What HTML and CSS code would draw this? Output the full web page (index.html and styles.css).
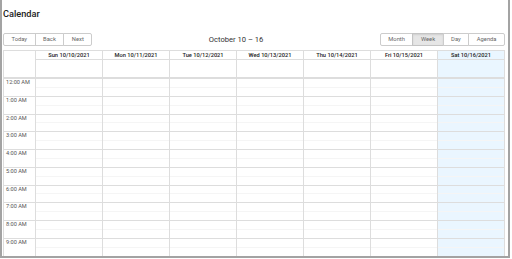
FILE: index.html
```html
<!DOCTYPE html>
<html lang="en">
<head>
    <meta charset="UTF-8">
    <meta name="viewport" content="width=device-width, initial-scale=1.0">
    <title>Calendar</title>
    <link rel="stylesheet" href="styles.css">
</head>
<body>
    <div class="frame">
        <h1 class="page-title">Calendar</h1>

        <div class="calendar">
            <div class="toolbar">
                <span class="btn-group">
                    <button type="button">Today</button>
                    <button type="button">Back</button>
                    <button type="button">Next</button>
                </span>
                <span class="toolbar-label">October 10 – 16</span>
                <span class="btn-group">
                    <button type="button">Month</button>
                    <button type="button" class="active">Week</button>
                    <button type="button">Day</button>
                    <button type="button">Agenda</button>
                </span>
            </div>

            <div class="time-view">
                <div class="time-header">
                    <div class="header-gutter"></div>
                    <div class="day-head"><div class="day-name">Sun 10/10/2021</div><div class="allday"></div></div>
                    <div class="day-head"><div class="day-name">Mon 10/11/2021</div><div class="allday"></div></div>
                    <div class="day-head"><div class="day-name">Tue 10/12/2021</div><div class="allday"></div></div>
                    <div class="day-head"><div class="day-name">Wed 10/13/2021</div><div class="allday"></div></div>
                    <div class="day-head"><div class="day-name">Thu 10/14/2021</div><div class="allday"></div></div>
                    <div class="day-head"><div class="day-name">Fri 10/15/2021</div><div class="allday"></div></div>
                    <div class="day-head today"><div class="day-name">Sat 10/16/2021</div><div class="allday"></div></div>
                </div>

                <div class="time-content">
                    <div class="hour-row"><div class="label">12:00 AM</div><div class="slot"></div><div class="slot"></div><div class="slot"></div><div class="slot"></div><div class="slot"></div><div class="slot"></div><div class="slot today"></div></div>
                    <div class="hour-row"><div class="label">1:00 AM</div><div class="slot"></div><div class="slot"></div><div class="slot"></div><div class="slot"></div><div class="slot"></div><div class="slot"></div><div class="slot today"></div></div>
                    <div class="hour-row"><div class="label">2:00 AM</div><div class="slot"></div><div class="slot"></div><div class="slot"></div><div class="slot"></div><div class="slot"></div><div class="slot"></div><div class="slot today"></div></div>
                    <div class="hour-row"><div class="label">3:00 AM</div><div class="slot"></div><div class="slot"></div><div class="slot"></div><div class="slot"></div><div class="slot"></div><div class="slot"></div><div class="slot today"></div></div>
                    <div class="hour-row"><div class="label">4:00 AM</div><div class="slot"></div><div class="slot"></div><div class="slot"></div><div class="slot"></div><div class="slot"></div><div class="slot"></div><div class="slot today"></div></div>
                    <div class="hour-row"><div class="label">5:00 AM</div><div class="slot"></div><div class="slot"></div><div class="slot"></div><div class="slot"></div><div class="slot"></div><div class="slot"></div><div class="slot today"></div></div>
                    <div class="hour-row"><div class="label">6:00 AM</div><div class="slot"></div><div class="slot"></div><div class="slot"></div><div class="slot"></div><div class="slot"></div><div class="slot"></div><div class="slot today"></div></div>
                    <div class="hour-row"><div class="label">7:00 AM</div><div class="slot"></div><div class="slot"></div><div class="slot"></div><div class="slot"></div><div class="slot"></div><div class="slot"></div><div class="slot today"></div></div>
                    <div class="hour-row"><div class="label">8:00 AM</div><div class="slot"></div><div class="slot"></div><div class="slot"></div><div class="slot"></div><div class="slot"></div><div class="slot"></div><div class="slot today"></div></div>
                    <div class="hour-row"><div class="label">9:00 AM</div><div class="slot"></div><div class="slot"></div><div class="slot"></div><div class="slot"></div><div class="slot"></div><div class="slot"></div><div class="slot today"></div></div>
                </div>
            </div>
        </div>
    </div>
</body>
</html>
```

FILE: styles.css
```css
* {
    margin: 0;
    padding: 0;
    box-sizing: border-box;
}

body {
    font-family: Roboto, 'Liberation Sans', sans-serif;
    background: #ffffff;
    color: #373a3c;
}

.frame {
    width: 510px;
    height: 258px;
    border: 2px solid #a3a3a3;
    border-top: 0;
    padding: 0 3px 0 1px;
    overflow: hidden;
}

.page-title {
    font-size: 9.2px;
    font-weight: 500;
    line-height: 12px;
    color: #222;
    margin: 8px 0 13px 0;
}

.toolbar {
    display: flex;
    align-items: center;
    height: 13px;
    margin-bottom: 4px;
}

.btn-group {
    display: flex;
}

.btn-group button {
    font-family: inherit;
    font-size: 5.8px;
    line-height: 11px;
    height: 13px;
    padding: 0 7.5px;
    color: #666;
    background: #fff;
    border: 1px solid #ccc;
}

.btn-group button + button {
    margin-left: -1px;
}

.btn-group button:first-child {
    border-radius: 2px 0 0 2px;
}

.btn-group button:last-child {
    border-radius: 0 2px 2px 0;
}

.btn-group button.active {
    background: #e6e6e6;
    border-color: #c4c4c4;
    box-shadow: inset 0 1px 2px rgba(0,0,0,0.1);
}

.toolbar-label {
    flex: 1;
    text-align: center;
    font-size: 7.6px;
    color: #333;
}

.time-view {
    border-left: 1px solid #ddd;
    border-top: 1px solid #ddd;
}

.time-header,
.hour-row {
    display: grid;
    grid-template-columns: 32px repeat(7, 67px);
}

.header-gutter,
.day-head,
.hour-row > div {
    border-right: 1px solid #ddd;
}

.day-name {
    height: 9px;
    border-bottom: 1px solid #ddd;
    font-size: 5.7px;
    font-weight: 500;
    line-height: 8px;
    text-align: center;
    color: #222;
}

.allday {
    height: 17px;
}

.time-content {
    border-top: 2px solid #ddd;
}

.hour-row {
    height: 17.75px;
    border-bottom: 1px solid #ddd;
}

.label {
    font-size: 5.6px;
    line-height: 7px;
    padding: 0 2px;
    color: #555;
}

.slot {
    background-image: linear-gradient(#f5f5f5, #f5f5f5);
    background-size: 100% 1px;
    background-position: 0 50%;
    background-repeat: no-repeat;
}

.today {
    background-color: #eaf6ff;
}
```
